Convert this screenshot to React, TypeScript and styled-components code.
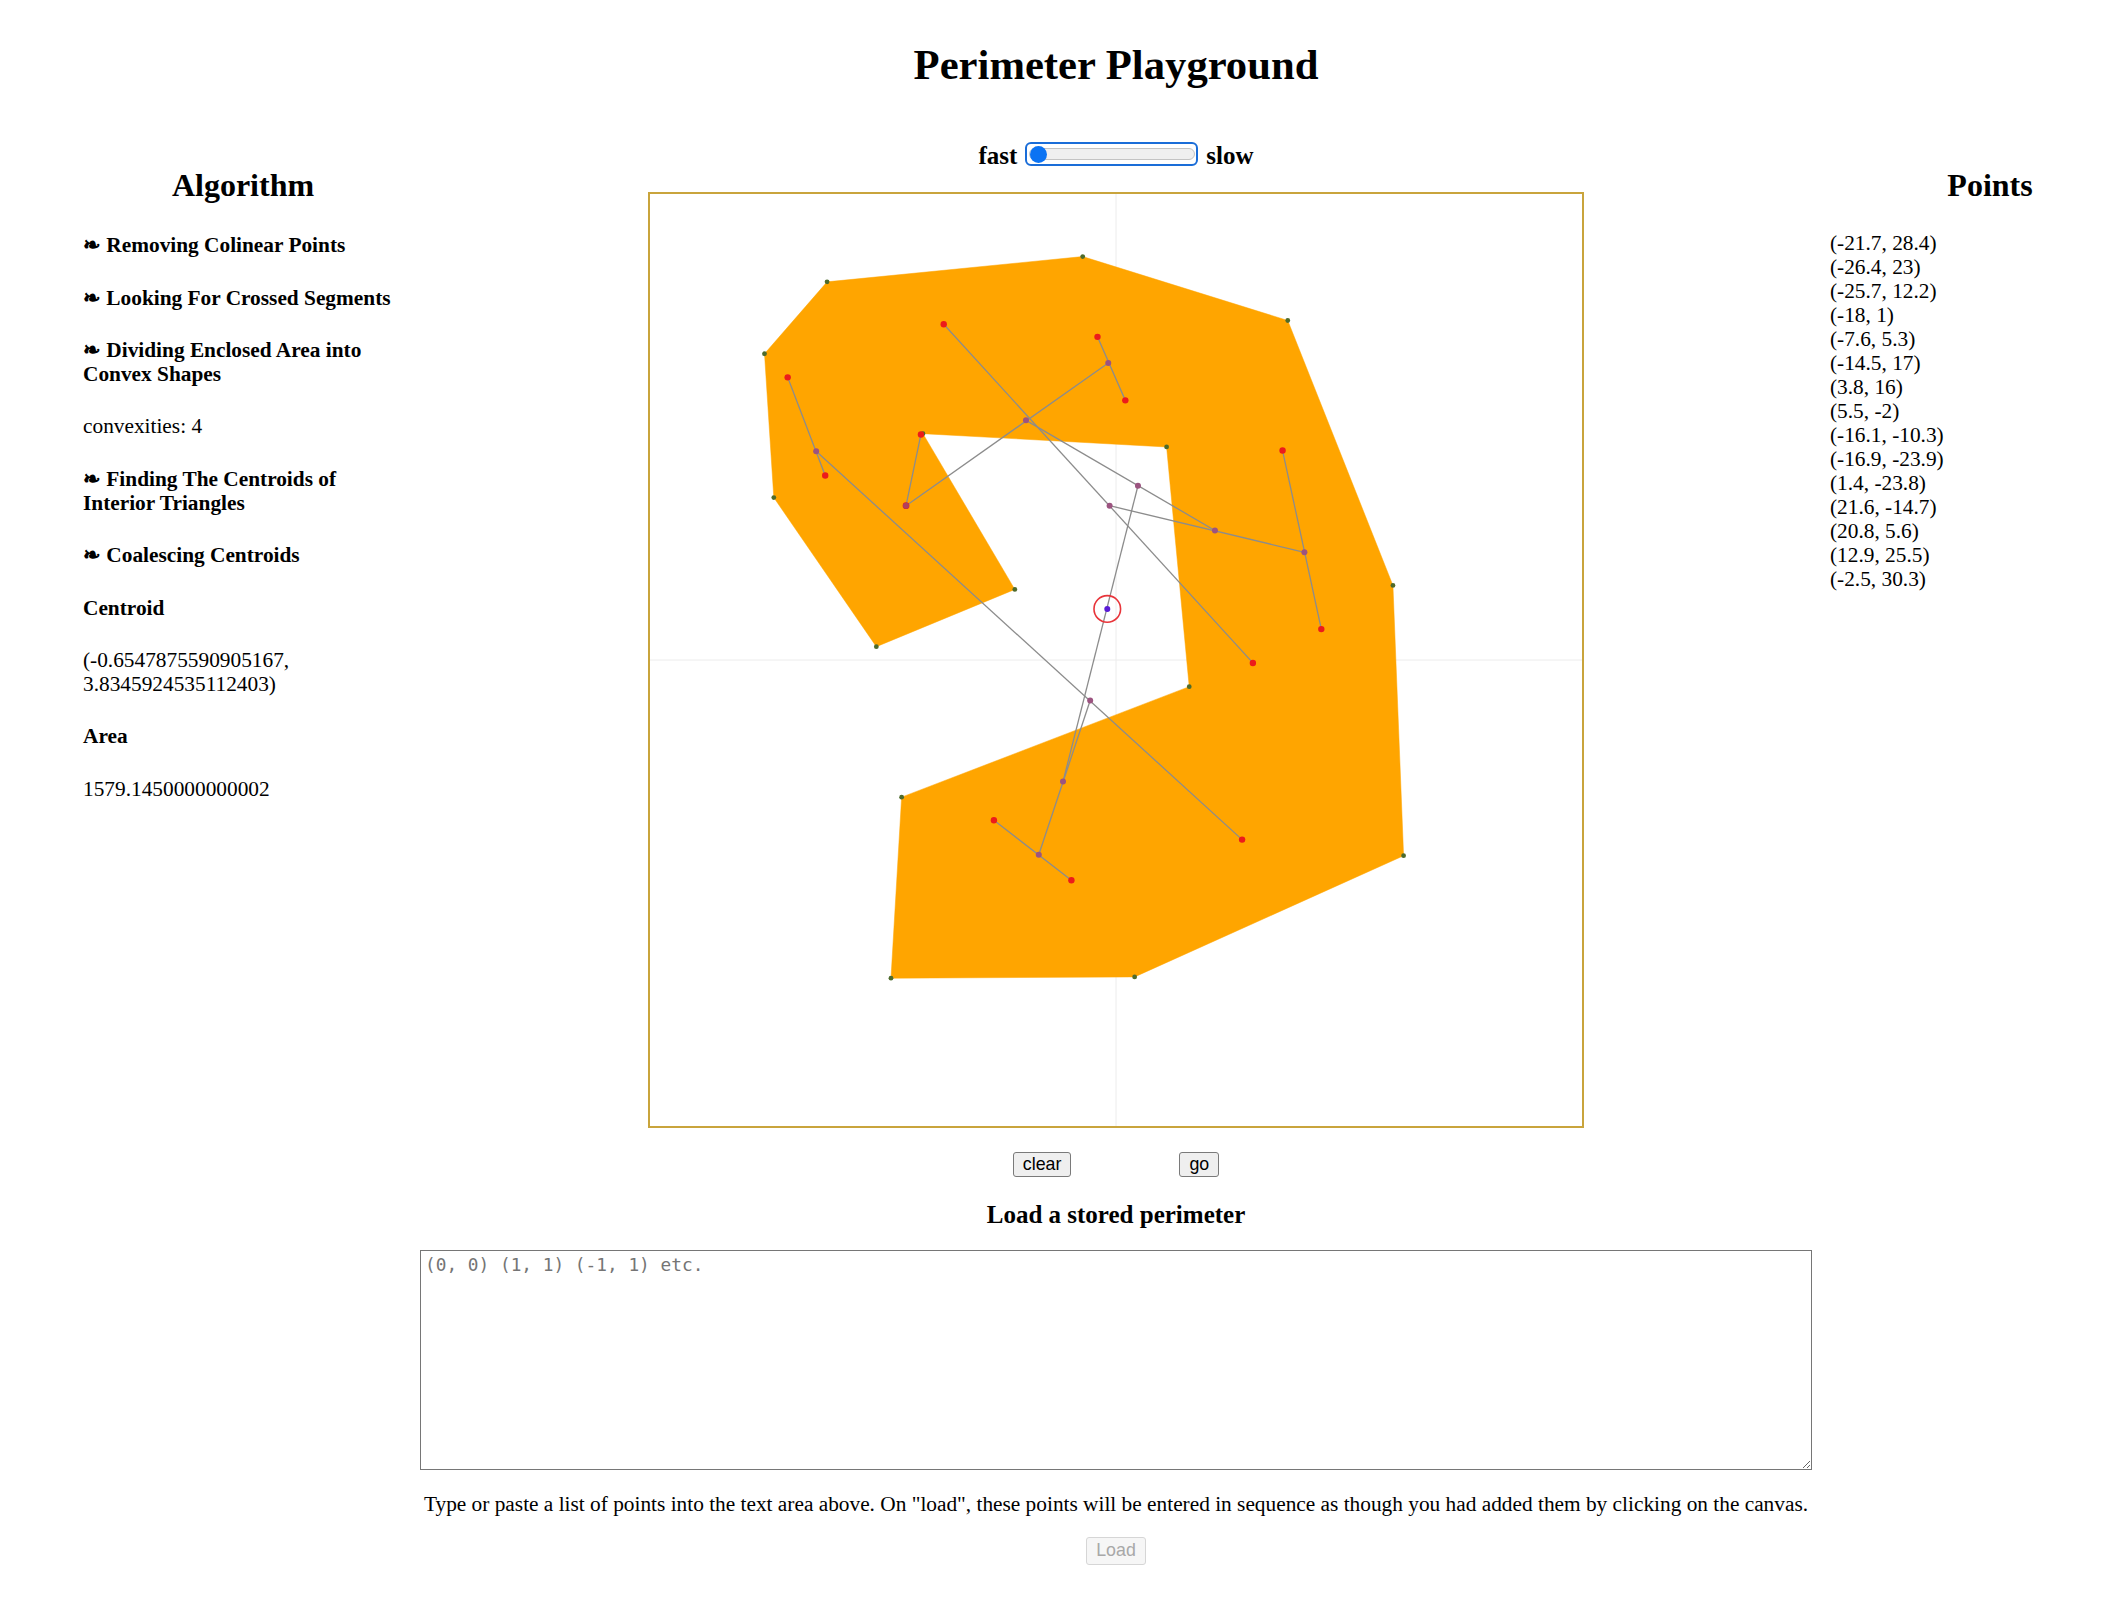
import React from "react";
import styled, { createGlobalStyle } from "styled-components";

const GlobalStyle = createGlobalStyle`
  html, body {
    margin: 0;
    padding: 0;
    background: #ffffff;
    overflow-x: hidden;
  }
  body {
    font-family: "Liberation Serif", "Times New Roman", serif;
    color: #000000;
  }
`;

const Page = styled.div`
  display: flex;
  align-items: flex-start;
  padding-left: 83px;
  width: max-content;
`;

const Side = styled.aside`
  flex: 0 0 320px;
  width: 320px;
`;

const Center = styled.main`
  flex: 0 0 1392px;
  width: 1392px;
  margin: 0 18px 0 17px;
  display: flex;
  flex-direction: column;
  align-items: center;
`;

const ColumnTitle = styled.h2<{ $after: number }>`
  font-size: 32px;
  line-height: 36px;
  font-weight: bold;
  text-align: center;
  margin: 167.4px 0 ${(p) => p.$after}px;
`;

const Step = styled.h4`
  font-size: 21.33px;
  line-height: 24px;
  font-weight: bold;
  margin: 28.4px 0;
`;

const Note = styled.p`
  font-size: 21.33px;
  line-height: 24px;
  margin: 28.4px 0;
`;

const PointList = styled.div`
  font-size: 21.33px;
  line-height: 24px;
`;

const PointRow = styled.div`
  white-space: nowrap;
`;

const Title = styled.h1`
  font-size: 42.67px;
  line-height: 48px;
  font-weight: bold;
  margin: 41px 0 0;
  text-align: center;
`;

const SpeedRow = styled.h3`
  display: flex;
  align-items: flex-start;
  gap: 8px;
  margin: 52.8px 0 0;
  font-size: 25px;
  line-height: 28px;
  font-weight: bold;
`;

const Slider = styled.input`
  -webkit-appearance: none;
  appearance: none;
  box-sizing: border-box;
  width: 173px;
  height: 24px;
  margin: 0.7px 0 0;
  padding: 0 1.5px;
  border: 2.5px solid #1a6dd8;
  border-radius: 6px;
  background: #ffffff;
  outline: none;

  &::-webkit-slider-runnable-track {
    box-sizing: border-box;
    height: 12px;
    background: #efefef;
    border: 1px solid #c3c3c3;
    border-radius: 6px;
  }

  &::-webkit-slider-thumb {
    -webkit-appearance: none;
    appearance: none;
    width: 17px;
    height: 17px;
    border-radius: 50%;
    background: #0b73f3;
    border: none;
    margin-top: -3.5px;
  }
`;

const Board = styled.div`
  box-sizing: border-box;
  width: 936px;
  height: 936px;
  margin-top: 22.7px;
  border: 2px solid #c9a43c;
  background: #ffffff;
  line-height: 0;
`;

const ButtonRow = styled.div`
  display: flex;
  gap: 108px;
  margin-top: 23.3px;
`;

const Button = styled.button`
  box-sizing: border-box;
  height: 25px;
  padding: 0 9px;
  font-family: "Liberation Sans", Arial, sans-serif;
  font-size: 17.8px;
  line-height: 20px;
  color: #000000;
  background: #efefef;
  border: 1px solid #7a7a7a;
  border-radius: 3px;
`;

const LoadTitle = styled.h3`
  font-size: 25px;
  line-height: 28px;
  font-weight: bold;
  margin: 24px 0 0;
`;

const PointsInput = styled.textarea`
  box-sizing: border-box;
  width: 1392px;
  height: 220px;
  margin-top: 21px;
  padding: 3px 4px;
  border: 1px solid #767676;
  border-radius: 0;
  font-family: "DejaVu Sans Mono", "Liberation Mono", monospace;
  font-size: 17.8px;
  line-height: 21px;
  color: #000000;
  background: #ffffff;

  &::placeholder {
    color: #757575;
  }
`;

const Help = styled.p`
  font-size: 21.33px;
  line-height: 24px;
  margin: 22.3px 0 0;
  text-align: center;
  white-space: nowrap;
`;

const LoadButton = styled.button`
  box-sizing: border-box;
  width: 60px;
  height: 28px;
  margin-top: 20.7px;
  padding: 0;
  font-family: "Liberation Sans", Arial, sans-serif;
  font-size: 17.8px;
  color: #a8a8a8;
  background: #f6f6f6;
  border: 1px solid #d6d6d6;
  border-radius: 3px;
`;

type P = [number, number];

const SIZE = 932;
const HALF = SIZE / 2;
const UNIT = SIZE / 70;
const tx = (p: P) => HALF + p[0] * UNIT;
const ty = (p: P) => HALF - p[1] * UNIT;

const perimeter: P[] = [
  [-21.7, 28.4],
  [-26.4, 23],
  [-25.7, 12.2],
  [-18, 1],
  [-7.6, 5.3],
  [-14.5, 17],
  [3.8, 16],
  [5.5, -2],
  [-16.1, -10.3],
  [-16.9, -23.9],
  [1.4, -23.8],
  [21.6, -14.7],
  [20.8, 5.6],
  [12.9, 25.5],
  [-2.5, 30.3],
];

const tri: Record<string, P> = {
  r1: [-12.94, 25.22],
  r2: [-1.39, 24.27],
  r3: [0.7, 19.5],
  r4: [-24.66, 21.23],
  r5: [-21.84, 13.86],
  r6: [-14.65, 16.94],
  r8: [12.51, 15.73],
  r9: [15.42, 2.32],
  r10: [10.28, -0.22],
  r11: [9.47, -13.49],
  r12: [-9.17, -12.04],
  r13: [-3.35, -16.54],
};

const merged: Record<string, P> = {
  a: [-0.58, 22.31],
  b: [-6.76, 18.0],
  c: [-22.52, 15.68],
  d: [-15.77, 11.59],
  e: [1.65, 13.09],
  f: [-0.48, 11.59],
  g: [7.43, 9.73],
  h: [14.15, 8.09],
  i: [-1.94, -3.04],
  j: [-3.98, -9.13],
  k: [-5.8, -14.63],
};

const all: Record<string, P> = { ...tri, ...merged };

const links: [string, string][] = [
  ["r4", "r5"],
  ["c", "r11"],
  ["r1", "r10"],
  ["r2", "r3"],
  ["a", "d"],
  ["r6", "d"],
  ["b", "g"],
  ["f", "h"],
  ["r8", "r9"],
  ["e", "j"],
  ["i", "k"],
  ["r12", "r13"],
];

const centroid: P = [-0.6547875590905167, 3.8345924535112403];

const PlaygroundCanvas = () => (
  <svg width={SIZE} height={SIZE} viewBox={`0 0 ${SIZE} ${SIZE}`}>
    <line x1={HALF} y1={0} x2={HALF} y2={SIZE} stroke="#ececec" strokeWidth={1} />
    <line x1={0} y1={HALF} x2={SIZE} y2={HALF} stroke="#ececec" strokeWidth={1} />
    <polygon
      points={perimeter.map((p) => `${tx(p)},${ty(p)}`).join(" ")}
      fill="#ffa500"
      stroke="#ffa500"
      strokeWidth={0.5}
    />
    {perimeter.map((p, n) => (
      <circle key={`v${n}`} cx={tx(p)} cy={ty(p)} r={2.4} fill="#4e6b2c" />
    ))}
    {links.map(([s, t]) => (
      <line
        key={`${s}-${t}`}
        x1={tx(all[s])}
        y1={ty(all[s])}
        x2={tx(all[t])}
        y2={ty(all[t])}
        stroke="#8c8c8c"
        strokeWidth={1.3}
      />
    ))}
    {Object.entries(tri).map(([key, p]) => (
      <circle key={key} cx={tx(p)} cy={ty(p)} r={3.2} fill="#ec1b1b" />
    ))}
    <circle cx={tx(merged.d)} cy={ty(merged.d)} r={3.4} fill="#e01f2a" />
    {Object.entries(merged).map(([key, p]) => (
      <circle
        key={key}
        cx={tx(p)}
        cy={ty(p)}
        r={3}
        fill={key === "d" ? "#b0405e" : "#9c5480"}
      />
    ))}
    <circle
      cx={tx(centroid)}
      cy={ty(centroid)}
      r={13.3}
      fill="none"
      stroke="#e8343a"
      strokeWidth={1.6}
    />
    <circle cx={tx(centroid)} cy={ty(centroid)} r={3} fill="#5a1bd6" />
  </svg>
);

const pointLabels = perimeter.map((p) => `(${p[0]}, ${p[1]})`);

export default function App() {
  return (
    <>
      <GlobalStyle />
      <Page>
        <Side>
          <ColumnTitle $after={29.8}>Algorithm</ColumnTitle>
          <Step>❧ Removing Colinear Points</Step>
          <Step>❧ Looking For Crossed Segments</Step>
          <Step>❧ Dividing Enclosed Area into Convex Shapes</Step>
          <Note>convexities: 4</Note>
          <Step>❧ Finding The Centroids of Interior Triangles</Step>
          <Step>❧ Coalescing Centroids</Step>
          <Step>Centroid</Step>
          <Note>(-0.6547875590905167, 3.8345924535112403)</Note>
          <Step>Area</Step>
          <Note>1579.1450000000002</Note>
        </Side>
        <Center>
          <Title>Perimeter Playground</Title>
          <SpeedRow>
            <span>fast</span>
            <Slider type="range" min={0} max={100} defaultValue={0} />
            <span>slow</span>
          </SpeedRow>
          <Board>
            <PlaygroundCanvas />
          </Board>
          <ButtonRow>
            <Button type="button">clear</Button>
            <Button type="button">go</Button>
          </ButtonRow>
          <LoadTitle>Load a stored perimeter</LoadTitle>
          <PointsInput placeholder="(0, 0) (1, 1) (-1, 1) etc." />
          <Help>
            Type or paste a list of points into the text area above. On "load", these points will be entered in
            sequence as though you had added them by clicking on the canvas.
          </Help>
          <LoadButton type="button" disabled>
            Load
          </LoadButton>
        </Center>
        <Side>
          <ColumnTitle $after={27.6}>Points</ColumnTitle>
          <PointList>
            {pointLabels.map((label) => (
              <PointRow key={label}>{label}</PointRow>
            ))}
          </PointList>
        </Side>
      </Page>
    </>
  );
}
